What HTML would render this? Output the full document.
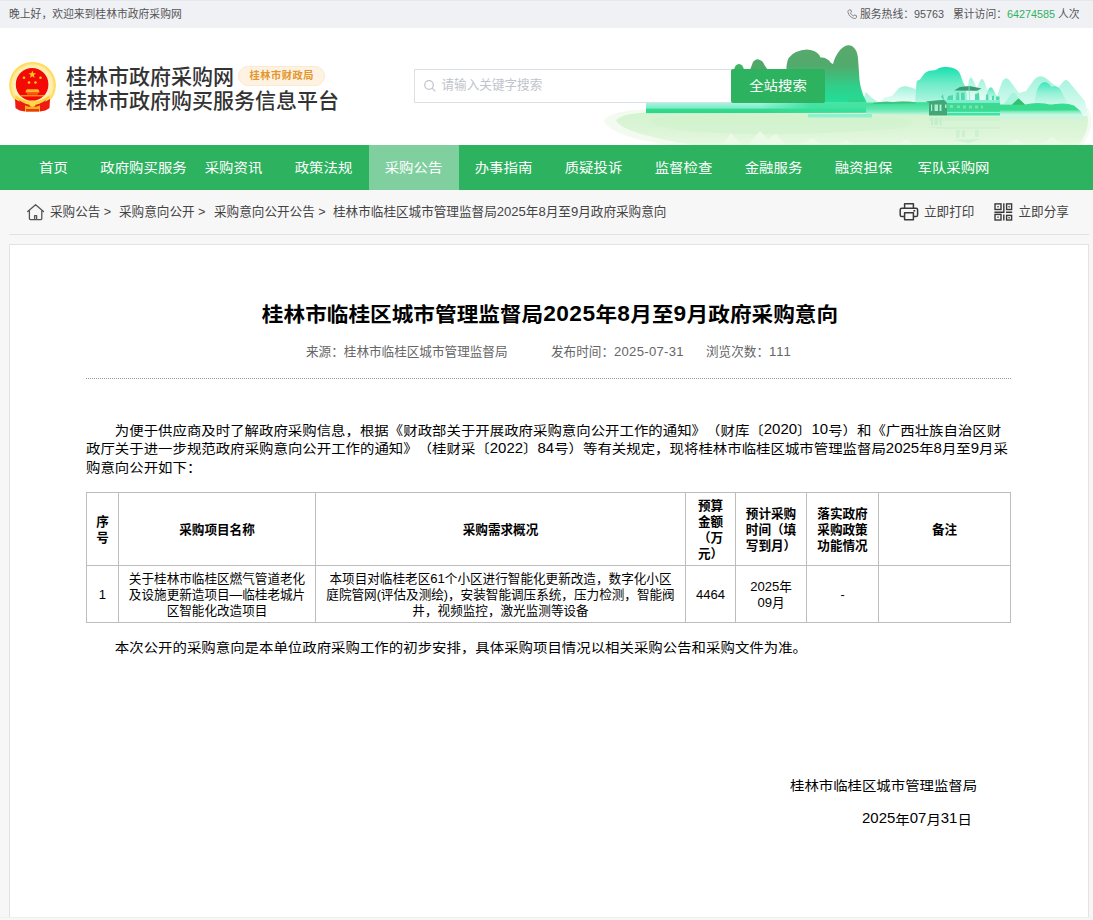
<!DOCTYPE html>
<html lang="zh-CN">
<head>
<meta charset="utf-8">
<title>桂林市临桂区城市管理监督局2025年8月至9月政府采购意向</title>
<style>
*{margin:0;padding:0;box-sizing:border-box;}
html,body{width:1093px;height:920px;overflow:hidden;background:#f7f7f7;}
body{font-family:"Liberation Sans","Noto Sans CJK SC",sans-serif;color:#333;position:relative;text-spacing-trim:space-all;font-kerning:none;}
.n{font-size:1.04em;letter-spacing:0;}
.nb{font-size:1.05em;letter-spacing:0.02em;}
.p .n,.sy .n{display:inline-block;text-indent:0;line-height:1;transform:scaleY(1.1);transform-origin:50% 85%;}
#title .nb{display:inline-block;line-height:1;transform:scaleY(1.07);transform-origin:50% 85%;}
.abs{position:absolute;white-space:nowrap;}
.sy{transform:scaleY(.9);transform-origin:50% 50%;}
#topbar{position:absolute;left:0;top:0;width:1093px;height:28px;background:#f0f1f5;font-size:10.8px;line-height:28px;color:#555;}
#header{position:absolute;left:0;top:28px;width:1093px;height:117px;background:#fff;overflow:hidden;}
#nav{position:absolute;left:0;top:145px;width:1093px;height:45px;background:#2db25f;}
#nav a{position:absolute;top:0;height:45px;line-height:45px;text-indent:-1px;transform:scaleY(.9);transform-origin:50% 22.5px;color:#fff;font-size:14.4px;text-align:center;text-decoration:none;white-space:nowrap;}
#navon{position:absolute;left:369px;top:0;width:90px;height:45px;background:#80d09f;}
#crumb{position:absolute;left:0;top:190px;width:1093px;height:44px;font-size:12.6px;line-height:44px;color:#444;}
#crumbline{position:absolute;left:9px;top:234px;width:1080px;height:1px;background:#e2e2e2;}
#box{position:absolute;left:9px;top:244px;width:1080px;height:673px;background:#fff;border:1px solid #e3e3e3;border-bottom:none;}
#title{transform:scaleY(.93);transform-origin:50% 50%;letter-spacing:0.05px;position:absolute;left:87px;top:297.500px;width:926px;text-align:center;font-size:21.6px;font-weight:bold;color:#000;line-height:34px;white-space:nowrap;}
.meta{position:absolute;top:343px;font-size:12.6px;line-height:18px;color:#666;white-space:nowrap;}
#dots{position:absolute;left:86px;top:378px;width:925px;height:0;border-top:1px dotted #999;}
.p{transform:scaleY(.9);transform-origin:0 0;position:absolute;left:86px;width:925px;font-size:14.4px;line-height:21px;letter-spacing:0.03px;color:#000;}
table{position:absolute;left:86px;top:492px;width:925px;border-collapse:collapse;table-layout:fixed;font-size:12.6px;line-height:15px;color:#000;}
td,th{border:1px solid #bdbdbd;text-align:center;vertical-align:middle;padding:0 6.5px;}
th{font-weight:bold;color:#000;}
.c{line-height:16px;position:relative;top:0.6px;}
</style>
</head>
<body>
<div id="topbar">
  <div style="position:absolute;left:0;top:0;width:1093px;height:1px;background:#e5e7eb;"></div>
  <span class="abs" style="left:9px;top:0;">晚上好，欢迎来到桂林市政府采购网</span>
  <svg class="abs" style="left:846.500px;top:8.500px;" width="10.500" height="10.500" viewBox="0 0 12 12"><path d="M2.6 1.2 L4.2 0.9 L5.2 3.4 L4 4.4 C4.6 5.9 6 7.4 7.6 8 L8.6 6.8 L11.1 7.8 L10.8 9.4 C10.6 10.6 9.6 11.2 8.4 10.9 C4.6 10 2 7.4 1.1 3.6 C0.8 2.4 1.4 1.4 2.6 1.2 Z" fill="none" stroke="#777" stroke-width="1"/></svg>
  <span class="abs" style="left:860px;top:0;">服务热线：95763</span>
  <span class="abs" style="left:953px;top:0;">累计访问：</span>
  <span class="abs" style="left:1007px;top:0;color:#2db25f;">64274585</span>
  <span class="abs" style="left:1058px;top:0;">人次</span>
</div>

<div id="header">
  <!-- landscape placeholder -->
  <svg id="land" class="abs" style="left:600px;top:0;" width="493" height="117" viewBox="600 28 493 117">
<defs>
<radialGradient id="gRef" cx="0.5" cy="0.12" r="0.62" gradientTransform="translate(0.5 0.12) scale(1 1.25) translate(-0.5 -0.12)">
<stop offset="0" stop-color="#cdf3cf"/><stop offset="0.55" stop-color="#dcf6d6"/><stop offset="0.85" stop-color="#edfae8"/><stop offset="1" stop-color="#ffffff"/>
</radialGradient>
<linearGradient id="gHill" x1="0" y1="0" x2="0" y2="1">
<stop offset="0" stop-color="#5aa86c"/><stop offset="0.35" stop-color="#52aa6c"/><stop offset="0.7" stop-color="#2fcf8a"/><stop offset="1" stop-color="#22e09a"/>
</linearGradient>
<linearGradient id="gTeal" x1="0" y1="0" x2="0" y2="1">
<stop offset="0" stop-color="#18e0b0"/><stop offset="0.45" stop-color="#6eecc8"/><stop offset="1" stop-color="#b8f6e2"/>
</linearGradient>
<linearGradient id="gPale" x1="0" y1="0" x2="0" y2="1">
<stop offset="0" stop-color="#9ff2dc"/><stop offset="0.55" stop-color="#c9f8ea"/><stop offset="1" stop-color="#e8fcf5"/>
</linearGradient>
<linearGradient id="gPale2" x1="0" y1="0" x2="0" y2="1">
<stop offset="0" stop-color="#2be3b4"/><stop offset="0.5" stop-color="#8cf0d2"/><stop offset="1" stop-color="#c8f8e8"/>
</linearGradient>
<linearGradient id="gShore" x1="0" y1="0" x2="0" y2="1">
<stop offset="0" stop-color="#3fdc94"/><stop offset="0.5" stop-color="#62e8b0"/><stop offset="1" stop-color="#bdf5dc"/>
</linearGradient>
<linearGradient id="gShoreL" x1="0" y1="0" x2="0" y2="1">
<stop offset="0" stop-color="#a6f4e0"/><stop offset="0.5" stop-color="#7cedc8"/><stop offset="0.62" stop-color="#35d98e"/><stop offset="0.92" stop-color="#2fd68a"/><stop offset="1" stop-color="#9aecc4"/>
</linearGradient>
<linearGradient id="gShoreM" x1="0" y1="0" x2="1" y2="0"><stop offset="0" stop-color="#36e09a" stop-opacity="0"/><stop offset="0.3" stop-color="#36e09a" stop-opacity="0.85"/><stop offset="1" stop-color="#3ae29e" stop-opacity="0.9"/></linearGradient>
<linearGradient id="gFade" x1="0" y1="0" x2="0" y2="1"><stop offset="0" stop-color="#5ee8a8"/><stop offset="1" stop-color="#c8f6e2" stop-opacity="0.3"/></linearGradient>
<linearGradient id="gRef2" x1="0" y1="0" x2="0" y2="1"><stop offset="0" stop-color="#d3f3cf"/><stop offset="0.6" stop-color="#dcf5d7"/><stop offset="1" stop-color="#e6f8e2"/></linearGradient>
</defs>
<!-- water reflection -->
<path d="M604 120 C612 110 640 108 700 108 L1088 108 C1094 118 1092 134 1082 145 L668 145 C636 140 606 132 604 120 Z" fill="#f3fbf0"/>
<path d="M616 120.500 C622 113 640 111.500 700 111 L1086 111 C1090 120 1088 134 1078 145 L694 145 C660 140 620 131 616 120.500 Z" fill="url(#gRef2)"/>
<path d="M655 118 C700 113 780 114 860 116 C900 117 930 122 900 128 C840 134 760 136 700 132 C670 130 640 124 655 118 Z" fill="#d2f2cd" opacity="0.7"/>
<path d="M1000 111 L1084 111 L1086 119 L1000 119 Z" fill="#c8f5e4" opacity="0.8"/>
<path d="M722 145 L731 133 L742 145 Z M748 145 L760 131 L768 139 L776 134 L786 145 Z M800 145 L812 138 L822 145 Z M838 145 L846 140 L854 145 Z M898 145 L906 139 L914 145 Z M1005 145 L1016 139 L1026 145 Z M1040 145 L1052 137 L1064 145 Z" fill="#ebf9e7"/>
<!-- far pale mountains right -->
<path d="M997 96 L1002 82 Q1006 75 1010 81 L1019 93 L1026 91 L1034 80 Q1040 73 1047 79 L1058 88 L1063 82 Q1066 78 1069 82 L1079 94 L1085 101 L1088 116 L997 116 Z" fill="url(#gPale)"/>
<path d="M1034 104 L1037 90 Q1042 78 1049 84 L1052 87 Q1056 84 1060 89 L1068 104 Z" fill="url(#gPale2)" opacity="0.85"/>
<path d="M1004 104 L1011 94 Q1013.500 91 1016 94 L1022 104 Z" fill="#a8f3dc"/>
<path d="M966 100 L969 80 Q971 75 973 80 L977 88 L980 81 Q982 77 984 81 L988 92 L990 100 Z" fill="url(#gPale)"/>
<path d="M984 102 L988 90 Q990.500 85 993 89 L1000 102 Z" fill="url(#gPale2)" opacity="0.8"/>
<!-- pale hills left of teal mountain -->
<path d="M880 102 L884 98 L892 96 L899 88 Q904 85 909 87 L916 89 L918 102 Z" fill="url(#gPale)"/>
<path d="M862 102 L866 92 L872 98 L878 102 Z" fill="#b5f5e0"/>
<!-- teal main mountain -->
<path d="M915 104 L916.500 82 Q917 80 920 79.500 L924 74 Q927 70.500 932 70.500 L936 70 Q940 66.500 946 67 Q953 67 957 70 Q960 72 960.500 75 L963 82 L966 88 L968 104 Z" fill="url(#gTeal)"/>
<!-- dark green hills -->
<path d="M734 70 Q735 64 739 64 Q743 64 744 70 Z" fill="#3fb562"/>
<path d="M750 70 L753 62 Q756 58 760 60 Q763 61 765 66 L768 70 Z" fill="#4fa868"/>
<path d="M786 104 L786.500 66 Q787 56 796 52 Q806 47.500 814 51 Q819 53 820.500 57.500 Q827 57 831 63 L833 64 Q835 56 840 50 Q846 43.500 852 46 Q857 49 858 58 L859.500 80 Q861 92 866 101 L867 104 Z" fill="url(#gHill)"/>
<path d="M846 104 L849 99 Q852 97 855 100 L858 98 Q861 96 863 99 L866 104 Z" fill="#2fd48a"/>
<!-- shoreline left -->
<path d="M646 103 L930 102.500 L930 112.500 L646 113.500 Z" fill="url(#gShoreL)"/>
<path d="M760 103 L930 102 L930 111.500 L760 112.500 Z" fill="url(#gShoreM)"/>
<path d="M873 103 Q885 100.500 893 102 Q905 100.500 916 102.500 L916 104 L873 104.200 Z" fill="#2fb870" opacity="0.75"/>
<path d="M866 104 L930 103 L930 115 L866 114 Z" fill="url(#gShore)" opacity="0.9"/>
<path d="M808 114 L872 114 L872 117.500 L808 117.500 Z" fill="#8df0cf"/>
<!-- shoreline right -->
<path d="M998 104.500 L1012 104.500 L1018.500 98.500 L1025 104.500 Q1035 102 1045 103.500 Q1050 105 1056 104 Q1066 102.500 1074 105.500 L1080 110.800 L998 111.500 Z" fill="#37dc90"/>
<path d="M998 110.500 L1080 110.500 L1084 117 L998 117 Z" fill="url(#gFade)"/>
<path d="M1012 104.800 L1018.500 98.500 L1025 104.800 Z" fill="#35c070"/>
<!-- boat -->
<g>
<path d="M954 90.500 L960 87 L969.500 86 L981.500 88.500 L977 90.800 Z" fill="#3a9a70"/>
<path d="M969 86 L969.600 100 M955.500 90.500 L955.500 100 M978 90.500 L978 100" stroke="#7feccc" stroke-width="0.8" fill="none"/>
<path d="M941 97 L943 94 L944 100 Z M948 96 L953 95 L953 100 L947 100 Z M956.500 93 L959 92 L959.500 100 L956 100 Z M961 93 L964.500 92.500 L965 100 L961 100 Z M975 94 L979 93 L979.500 100 L975 100 Z M986 95 L988 94 L988.500 100 L986 100 Z M992 96 L994 95.500 L994 100 L992 100 Z M996 96.500 L999.500 96.500 L999.500 100 L996 100 Z" fill="#4fd8a8"/>
<path d="M926 101.500 L944 99.800 L1000 100.200 L1000 103 L929 103 Z" fill="#7aeed0"/>
<path d="M926 101.500 L944 99.800 L947 103 L929 103 Z" fill="#3fa878"/>
<path d="M929 103 L1000 103 L1000 111 L929 111 Z" fill="#3fd890"/>
<path d="M929 103 L947 103 L947 115.500 L929 115.500 Z" fill="#42a676"/>
<path d="M947 111 L1000 111 L1000 115.500 L947 115.500 Z" fill="#3ee2a4"/>
<path d="M947 112.500 L1000 112.500" stroke="#8af3d4" stroke-width="1"/>
<path d="M931 104.500 L932.200 104.500 L932.200 111 L931 111 Z M934.500 104.500 L938 104.500 L938 111 L934.500 111 Z M939.500 104.500 L941.500 104.500 L941.500 111 L939.500 111 Z M945 104.500 L946.500 104.500 L946.500 108 L945 108 Z" fill="#a8f0d0"/>
<path d="M950 105 L953 105 L953 108 L950 108 Z M957 105.500 L960 105.500 L960 108 L957 108 Z M963 105.500 L966 105.500 L966 108.500 L963 108.500 Z M969 105.500 L972 105.500 L972 108.500 L969 108.500 Z M975 105.500 L978 105.500 L978 108.500 L975 108.500 Z M981 105.500 L983 105.500 L983 108.500 L981 108.500 Z" fill="#7deab8" opacity="0.8"/>
</g>
<!-- boat reflection -->
<g opacity="0.55">
<path d="M929 117 L1000 117 L1000 121 L929 121 Z" fill="#c6f2d0"/>
<path d="M931 118 L933 118 L933 125 L931 125 Z M934.500 118 L938 118 L938 125 L934.500 125 Z M939.500 118 L941.500 118 L941.500 125 L939.500 125 Z" fill="#b0eac4"/>
<path d="M926 127 L944 129 L1000 128.500 L1000 127 Z" fill="#c4f0d0"/>
<path d="M956 130 L960 130 L959 138 L956.500 138 Z M962 130 L965 130 L965 137 L962 137 Z M975 130 L979 130 L978.500 137 L975 137 Z M954 140 L981 139 L969 143 Z" fill="#bdeecb"/>
</g>
</svg>
  <!-- emblem placeholder -->
  <svg id="emblem" class="abs" style="left:6px;top:30px;" width="54" height="58" viewBox="6 58 54 58">
<defs>
<radialGradient id="gRing" cx="0.5" cy="0.5" r="0.5">
<stop offset="0.7" stop-color="#fff3c4"/><stop offset="0.86" stop-color="#ffeaa0"/><stop offset="0.96" stop-color="#ffd84a"/><stop offset="1" stop-color="#ffe07a" stop-opacity="0.5"/>
</radialGradient>
</defs>
<circle cx="32.500" cy="85.300" r="23.600" fill="url(#gRing)"/>
<path d="M15 99 L25 104.500 L25 111.500 Q19 111 15.500 108 Z M50 99 L40 104.500 L40 111.500 Q46 111 49.500 108 Z" fill="#ee1c10"/>
<path d="M25 106 L32.500 103 L40 106 L40 111.500 L25 111.500 Z" fill="#f7b21a"/>
<path d="M26 109 L39 109 L39 111.600 L26 111.600 Z" fill="#ee3a10"/>
<circle cx="32.100" cy="84.400" r="16.300" fill="#f40a05"/>
<path d="M15.500 95 Q32.500 108 49.500 95 L49.500 98 Q32.500 111 15.500 98 Z" fill="#ffd23a"/>
<path d="M19 100 Q32.500 110 46 100 L45 102.500 Q32.500 111.500 20 102.500 Z" fill="#ee1c10"/>
<circle cx="32.500" cy="103.800" r="3.200" fill="#ffd84a"/>
<path d="M32.300 70.600 L33.250 73.300 L36.100 73.350 L33.800 75.050 L34.650 77.800 L32.300 76.150 L29.950 77.800 L30.800 75.050 L28.500 73.350 L31.350 73.300 Z" fill="#ffd21e"/>
<circle cx="24" cy="77.700" r="1.300" fill="#ffc81e"/><circle cx="40.500" cy="77.700" r="1.300" fill="#ffc81e"/>
<circle cx="29" cy="82.500" r="1.300" fill="#ffc81e"/><circle cx="35.500" cy="82.500" r="1.300" fill="#ffc81e"/>
<path d="M26 90.500 L27 89.200 L38 89.200 L39 90.500 L39.500 92.400 L25.500 92.400 Z" fill="#ffb428"/>
<path d="M27 93.200 L38 93.200 L38 94.600 L27 94.600 Z" fill="#f86a1e"/>
<path d="M20.500 95.300 L44.500 95.300 L44.500 96.300 L20.500 96.300 Z" fill="#ffc21e"/>
</svg>
  <div class="abs" style="left:66px;top:37px;font-size:21px;line-height:24px;color:#333;font-weight:500;">桂林市政府采购网</div>
  <div class="abs" style="left:66px;top:61px;font-size:21px;line-height:24px;color:#333;font-weight:500;">桂林市政府购买服务信息平台</div>
  <div class="abs" style="left:238px;top:38px;width:87px;height:19.5px;border-radius:10px;background:#fef3e3;border:1px solid #fde9d0;color:#e3962c;font-size:10.2px;font-weight:700;letter-spacing:0.55px;padding-left:0.6px;line-height:17.5px;text-align:center;">桂林市财政局</div>
  <div class="abs" style="left:414px;top:41px;width:318px;height:34px;border:1px solid #dcdfe6;background:#fff;"></div>
  <svg class="abs" style="left:423px;top:51px;" width="14" height="14" viewBox="0 0 14 14"><circle cx="6" cy="6" r="4.3" fill="none" stroke="#c0c4cc" stroke-width="1.2"/><path d="M9.2 9.2 L12.3 12.3" stroke="#c0c4cc" stroke-width="1.2"/></svg>
  <div class="abs" style="left:441.500px;top:40px;font-size:12.6px;line-height:34px;color:#c0c4cc;">请输入关键字搜索</div>
  <div class="abs" style="left:731px;top:41px;width:94px;height:34px;background:#2db25f;border-radius:2px;"></div>
  <div class="abs sy" style="left:731px;top:41px;width:94px;height:34px;color:#fff;font-size:14.4px;line-height:34px;text-align:center;">全站搜索</div>
</div>

<div id="nav">
  <div id="navon"></div>
  <a style="left:9px;width:90px;">首页</a>
  <a style="left:99px;width:90px;">政府购买服务</a>
  <a style="left:189px;width:90px;">采购资讯</a>
  <a style="left:279px;width:90px;">政策法规</a>
  <a style="left:369px;width:90px;">采购公告</a>
  <a style="left:459px;width:90px;">办事指南</a>
  <a style="left:549px;width:90px;">质疑投诉</a>
  <a style="left:639px;width:90px;">监督检查</a>
  <a style="left:729px;width:90px;">金融服务</a>
  <a style="left:819px;width:90px;">融资担保</a>
  <a style="left:909px;width:90px;">军队采购网</a>
</div>

<div id="crumb">
  <svg class="abs" style="left:26px;top:13px;" width="20" height="19" viewBox="0 0 20 19"><path d="M1.700 8.500 L9.600 1.700 L17.500 8.500 M3.400 7.300 V15.600 Q3.400 16.600 4.400 16.600 H14.800 Q15.800 16.600 15.800 15.600 V7.300 M8.600 16.600 V12.600 H10.600 V16.600" fill="none" stroke="#555" stroke-width="1.3" stroke-linejoin="round" stroke-linecap="round"/></svg>
  <span class="abs" style="left:50px;top:0;">采购公告 &gt;</span>
  <span class="abs" style="left:119px;top:0;">采购意向公开 &gt;</span>
  <span class="abs" style="left:214px;top:0;">采购意向公开公告 &gt;</span>
  <span class="abs" style="left:333px;top:0;">桂林市临桂区城市管理监督局<span class="n">2025</span>年<span class="n">8</span>月至<span class="n">9</span>月政府采购意向</span>
  <svg class="abs" style="left:898px;top:12px;" width="22" height="20" viewBox="898 202 22 20"><path d="M904.600 208 V203.800 H913.400 V208 M904.600 216.600 H901.800 Q900.200 216.600 900.200 215 V209.800 Q900.200 208.200 901.800 208.200 H916 Q917.600 208.200 917.600 209.800 V215 Q917.600 216.600 916 216.600 H913.400 M904.600 212.800 H913.400 V219.800 H904.600 Z" fill="none" stroke="#3a3a3a" stroke-width="1.500" stroke-linejoin="round"/><rect x="913.400" y="210" width="1.800" height="1.600" fill="#3a3a3a"/></svg>
  <span class="abs" style="left:924px;top:0;font-size:12.6px;">立即打印</span>
  <svg class="abs" style="left:993px;top:12px;" width="22" height="20" viewBox="993 202 22 20"><g fill="none" stroke="#3a3a3a" stroke-width="1.400"><rect x="995" y="203.900" width="6" height="5.600"/><rect x="1006.600" y="203.900" width="5" height="5.600"/><rect x="995" y="214.400" width="6" height="5.600"/><rect x="1006.600" y="215.400" width="5" height="4.600"/><path d="M1003.800 203.300 V212.200 H994.400 M1003.800 214.400 V220.600 M1006 212.200 H1012.200"/></g><rect x="997.300" y="206" width="1.400" height="1.400" fill="#444"/><rect x="1008.400" y="206" width="1.400" height="1.400" fill="#444"/><rect x="997.300" y="216.500" width="1.400" height="1.400" fill="#444"/><rect x="1008.400" y="217" width="1.400" height="1.400" fill="#444"/></svg>
  <span class="abs" style="left:1018.500px;top:0;font-size:12.6px;">立即分享</span>
</div>
<div id="crumbline"></div>

<div id="box"></div>
<div style="position:absolute;left:0;top:917px;width:1093px;height:1px;background:#f0f0f0;"></div>
<div id="title">桂林市临桂区城市管理监督局<span class="nb">2025</span>年<span class="nb">8</span>月至<span class="nb">9</span>月政府采购意向</div>
<div class="meta" style="left:306px;">来源：桂林市临桂区城市管理监督局</div>
<div class="meta" style="left:551px;">发布时间：<span class="n" style="letter-spacing:0.022em;">2025-07-31</span></div>
<div class="meta" style="left:706px;">浏览次数：<span class="n">111</span></div>
<div id="dots"></div>

<div class="p" style="top:421px;text-indent:28.8px;">为便于供应商及时了解政府采购信息，根据《财政部关于开展政府采购意向公开工作的通知》（财库〔<span class="n">2020</span>〕<span class="n">10</span>号）和《广西壮族自治区财政厅关于进一步规范政府采购意向公开工作的通知》（桂财采〔<span class="n">2022</span>〕<span class="n">84</span>号）等有关规定，现将桂林市临桂区城市管理监督局<span class="n">2025</span>年<span class="n">8</span>月至<span class="n">9</span>月采购意向公开如下：</div>

<table>
<colgroup><col style="width:32px"><col style="width:197px"><col style="width:370px"><col style="width:50px"><col style="width:71px"><col style="width:72px"><col style="width:132px"></colgroup>
<tr style="height:73px;"><th><div class="c">序号</div></th><th><div class="c">采购项目名称</div></th><th><div class="c">采购需求概况</div></th><th><div class="c">预算金额（万元）</div></th><th><div class="c">预计采购时间（填写到月）</div></th><th><div class="c">落实政府采购政策功能情况</div></th><th><div class="c">备注</div></th></tr>
<tr style="height:57px;"><td><div class="c"><span class="n">1</span></div></td><td><div class="c">关于桂林市临桂区燃气管道老化<br>及设施更新造项目—临桂老城片<br>区智能化改造项目</div></td><td><div class="c">本项目对临桂老区<span class="n">61</span>个小区进行智能化更新改造，数字化小区<br>庭院管网(评估及测绘)，安装智能调压系统，压力检测，智能阀<br>井，视频监控，激光监测等设备</div></td><td><div class="c"><span class="n">4464</span></div></td><td><div class="c"><span class="n">2025</span>年<br><span class="n">09</span>月</div></td><td><div class="c">-</div></td><td></td></tr>
</table>

<div class="p" style="top:638px;text-indent:28.8px;">本次公开的采购意向是本单位政府采购工作的初步安排，具体采购项目情况以相关采购公告和采购文件为准。</div>
<div class="abs sy" style="left:790px;top:776px;font-size:14.4px;line-height:19px;color:#000;">桂林市临桂区城市管理监督局</div>
<div class="abs sy" style="left:862px;top:810px;font-size:14.4px;line-height:19px;color:#000;"><span class="n">2025</span>年<span class="n">07</span>月<span class="n">31</span>日</div>
</body>
</html>
